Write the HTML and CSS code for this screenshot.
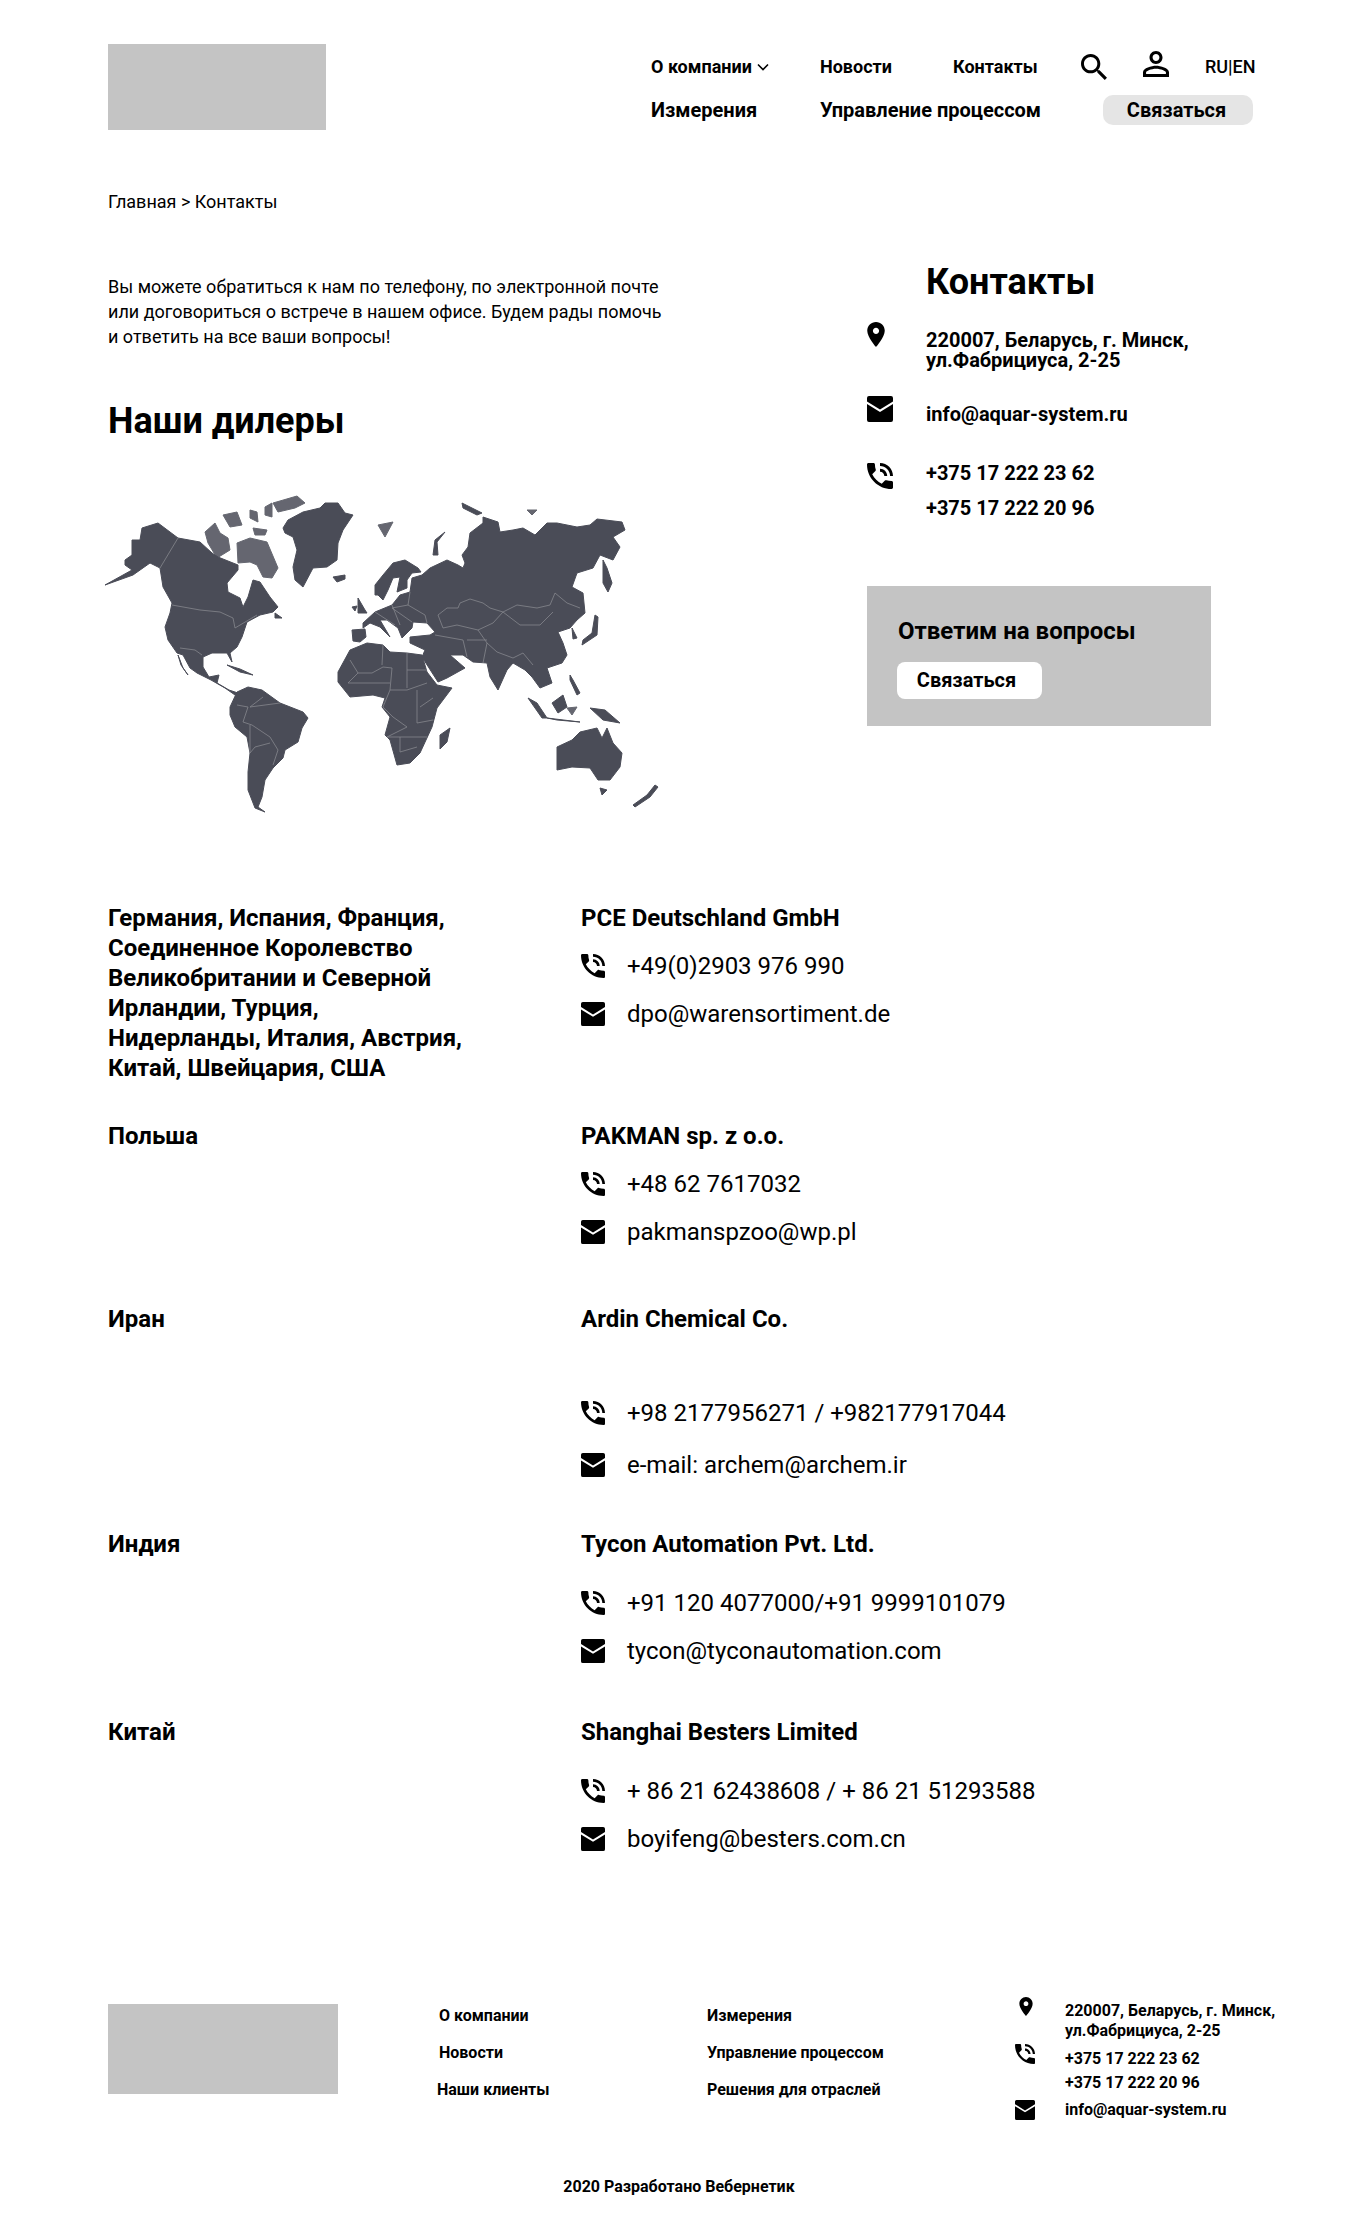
FILE: index.html
```html
<!DOCTYPE html>
<html lang="ru">
<head>
    <meta charset="UTF-8">
    <title>Контакты</title>
    <link rel="stylesheet" href="styles.css">
</head>
<body>

    <svg class="sprite" xmlns="http://www.w3.org/2000/svg">
        <symbol id="i-pin" viewBox="5 2 14 20"><path d="M12 2C8.13 2 5 5.13 5 9c0 5.25 7 13 7 13s7-7.75 7-13c0-3.87-3.13-7-7-7zm0 9.5c-1.38 0-2.5-1.12-2.5-2.5s1.12-2.5 2.5-2.5 2.5 1.12 2.5 2.5-1.12 2.5-2.5 2.5z"/></symbol>
        <symbol id="i-mail" viewBox="0 0 26 26"><path fill-rule="evenodd" d="M2 0h22a2 2 0 0 1 2 2v22a2 2 0 0 1-2 2H2a2 2 0 0 1-2-2V2a2 2 0 0 1 2-2zM0 5.5V8l13 8 13-8V5.5l-13 8z"/></symbol>
        <symbol id="i-phone" viewBox="3 3 18 18"><path d="M20 15.5c-1.25 0-2.45-.2-3.57-.57-.35-.11-.74-.03-1.02.24l-2.2 2.2c-2.83-1.44-5.15-3.75-6.59-6.59l2.2-2.21c.28-.26.36-.65.25-1C8.7 6.45 8.5 5.25 8.5 4c0-.55-.45-1-1-1H4c-.55 0-1 .45-1 1 0 9.39 7.61 17 17 17 .55 0 1-.45 1-1v-3.5c0-.55-.45-1-1-1zM19 12h2c0-4.97-4.03-9-9-9v2c3.87 0 7 3.13 7 7zm-4 0h2c0-2.76-2.24-5-5-5v2c1.66 0 3 1.34 3 3z"/></symbol>
    </svg>

    <header class="header">
        <div class="logo"></div>
        <nav class="nav">
            <a class="nav-top" href="#">О компании
                <svg class="chevron" viewBox="0 0 12 8"><path d="M1 1.5l5 5 5-5" fill="none" stroke="#000" stroke-width="1.6"/></svg>
            </a>
            <a class="nav-top" href="#">Новости</a>
            <a class="nav-top" href="#">Контакты</a>
            <div class="nav-tools">
                <svg class="tool-search" viewBox="3 3 17.5 17.5"><path d="M15.5 14h-.79l-.28-.27C15.41 12.59 16 11.11 16 9.5 16 5.91 13.09 3 9.5 3S3 5.91 3 9.5 5.91 16 9.5 16c1.61 0 3.09-.59 4.23-1.57l.27.28v.79l5 4.99L20.49 19l-4.99-5zm-6 0C7.01 14 5 11.99 5 9.5S7.01 5 9.5 5 14 7.01 14 9.5 11.99 14 9.5 14z"/></svg>
                <svg class="tool-user" viewBox="4 4 16 16"><path d="M12 5.9c1.16 0 2.1.94 2.1 2.1s-.94 2.1-2.1 2.1S9.9 9.16 9.9 8s.94-2.1 2.1-2.1m0 9c2.97 0 6.1 1.46 6.1 2.1v1.1H5.9V17c0-.64 3.13-2.1 6.1-2.1M12 4C9.79 4 8 5.79 8 8s1.79 4 4 4 4-1.79 4-4-1.79-4-4-4zm0 9c-2.67 0-8 1.34-8 4v3h16v-3c0-2.66-5.33-4-8-4z"/></svg>
                <span class="lang">RU|EN</span>
            </div>
            <a class="nav-main" href="#">Измерения</a>
            <a class="nav-main" href="#">Управление процессом</a>
            <a class="nav-btn" href="#">Связаться</a>
        </nav>
    </header>

    <div class="breadcrumbs">Главная &gt; Контакты</div>

    <main class="content">
        <section class="intro">
            <p class="intro-text">Вы можете обратиться к нам по телефону, по электронной почте<br>или договориться о встрече в нашем офисе. Будем рады помочь<br>и ответить на все ваши вопросы!</p>
            <h2 class="dealers-title">Наши дилеры</h2>
            <svg class="world-map" viewBox="100 480 580 340">
                <g class="land">
                    <!-- north america -->
                    <polygon points="125,560 132,555 132,540 140,540 142,528 158,523 178,538 200,542 212,553 218,557 238,565 238,570 227,583 228,592 240,598 243,607 248,597 253,580 260,582 270,597 278,607 273,612 260,615 247,622 242,637 237,647 230,653 232,662 227,653 212,653 203,657 203,667 209,677 219,675 217,683 229,690 238,693 235,695 225,688 211,680 197,673 190,668 183,655 177,653 168,640 165,627 170,613 172,603 163,587 160,568 150,563 133,575 105,585 132,570 125,565"/>
                    <polygon points="178,655 183,668 188,675 181,665"/>
                    <polygon points="275,613 282,618 275,618"/>
                    <polygon points="227,665 240,669 253,675 240,672"/>
                    <!-- south america -->
                    <polygon points="230,707 237,692 248,687 262,690 280,703 303,712 308,718 302,728 298,742 285,750 283,758 273,768 265,780 262,797 258,807 265,812 255,808 248,790 248,772 250,753 247,737 235,727 230,715"/>
                    <!-- greenland, iceland -->
                    <polygon points="283,528 288,520 303,512 320,508 325,503 338,503 345,513 353,515 343,530 338,543 337,560 327,567 313,568 303,587 295,580 293,567 297,550 293,537 285,533"/>
                    <polygon points="333,577 345,575 345,579 337,582"/>
                    <!-- africa -->
                    <polygon points="338,672 350,650 367,643 383,645 390,652 407,653 422,655 427,672 437,685 452,688 437,708 432,727 420,753 410,763 397,765 390,740 385,735 390,717 382,707 385,698 373,695 350,697 338,682"/>
                    <polygon points="440,735 450,728 447,742 440,749"/>
                    <!-- eurasia -->
                    <polygon points="352,630 365,629 366,637 360,642 353,641"/>
                    <polygon points="375,585 383,575 393,563 405,560 418,568 421,572 412,573 407,580 407,588 397,592 400,577 393,578 388,590 383,600 378,595 375,595"/>
                    <polygon points="410,592 412,578 422,575 430,568 447,560 458,565 463,568 465,563 462,555 468,547 470,533 483,523 483,517 498,522 500,532 513,530 523,528 535,535 547,523 557,523 577,527 590,525 597,519 622,522 625,530 613,537 620,547 613,560 600,555 593,568 577,573 572,587 583,593 585,613 577,620 570,628 558,632 563,643 567,655 562,663 547,668 552,683 540,688 532,677 525,670 513,663 507,670 498,690 490,677 487,663 473,662 463,655 450,655 465,668 447,678 438,682 422,657 425,650 410,643 410,637 430,635 435,632 427,623 413,622 412,628 402,638 398,628 387,620 380,620 390,637 380,627 370,623 363,628 363,623 375,612 392,605 400,595"/>
                    <polygon points="358,598 365,610 367,613 358,613"/>
                    <polygon points="352,607 357,606 355,611"/>
                    <polygon points="603,560 607,568 612,583 608,592 603,583"/>
                    <polygon points="595,615 598,617 597,635 582,645 583,640 592,633"/>
                    <polygon points="572,628 577,638 573,639"/>
                    <polygon points="445,532 435,540 433,555 438,555 437,542"/>
                    <polygon points="462,503 482,513 477,515 463,508"/>
                    <!-- south east asia, oceania -->
                    <polygon points="570,675 573,680 580,693 577,695 570,680"/>
                    <polygon points="528,698 537,703 547,718 542,718"/>
                    <polygon points="552,703 563,695 567,707 558,713"/>
                    <polygon points="590,708 605,710 620,723 603,720"/>
                    <polygon points="547,718 580,722 557,720"/>
                    <polygon points="557,747 572,740 580,732 597,728 602,738 607,728 613,743 622,753 620,767 610,780 598,780 590,768 572,767 557,770"/>
                    <polygon points="600,788 607,790 602,795"/>
                    <polygon points="633,805 647,795 655,785 658,787 650,797 635,807"/>
                </g>
                <g class="land land-faint">
                    <!-- arctic islands -->
                    <polygon points="205,532 215,523 220,533 228,538 230,550 217,558 208,543"/>
                    <polygon points="223,515 237,512 242,525 230,527"/>
                    <polygon points="250,510 257,512 258,522 250,518"/>
                    <polygon points="265,507 272,503 272,517 265,515"/>
                    <polygon points="273,503 297,496 305,503 295,508 278,512"/>
                    <polygon points="237,543 250,538 267,542 278,568 272,578 263,577 257,565 250,562 238,563"/>
                    <polygon points="253,528 267,530 265,535 255,535"/>
                    <polygon points="378,525 393,522 385,537"/>
                    <polygon points="527,510 537,510 532,515"/>
                    <polygon points="567,708 577,707 572,715"/>
                </g>
                <g class="borders">
                    <polyline points="178,538 160,568"/>
                    <polyline points="172,605 200,610 220,612 233,618 235,628 257,615"/>
                    <polyline points="180,648 195,650 202,655"/>
                    <polyline points="237,705 248,707 243,722 252,725 270,737 278,750 273,765"/>
                    <polyline points="250,725 250,753 255,747 270,743"/>
                    <polyline points="263,697 250,707 280,703"/>
                    <polyline points="350,660 358,673 372,673 383,667 392,668 390,690 407,690 427,683"/>
                    <polyline points="383,645 382,665"/>
                    <polyline points="407,653 407,688"/>
                    <polyline points="407,670 427,670"/>
                    <polyline points="358,673 348,683 373,683 390,683"/>
                    <polyline points="390,690 383,707 393,717 407,727 387,737 427,737"/>
                    <polyline points="417,690 417,723 433,720"/>
                    <polyline points="400,737 400,752 417,747"/>
                    <polyline points="433,698 420,707"/>
                    <polyline points="438,615 447,608 458,608 460,603 470,599 483,603 490,608 503,612 517,605 537,608 550,605 555,593 567,603 580,608"/>
                    <polyline points="503,612 520,625 540,625 553,612"/>
                    <polyline points="503,612 493,623 478,630 457,625 443,628 438,615"/>
                    <polyline points="478,630 487,643 497,652 513,658 523,653 533,665"/>
                    <polyline points="435,635 463,640 467,657"/>
                    <polyline points="467,640 487,640"/>
                    <polyline points="487,643 483,663"/>
                    <polyline points="410,592 408,605 425,615 427,623"/>
                    <polyline points="392,605 400,625"/>
                    <polyline points="375,612 395,625"/>
                    <polyline points="408,605 392,608 412,622"/>
                </g>
            </svg>
        </section>

        <aside class="contacts">
            <h2 class="contacts-title">Контакты</h2>
            <div class="contact-row contact-address">
                <svg class="ic-pin"><use href="#i-pin"/></svg>
                <div class="contact-text">220007, Беларусь, г. Минск,<br>ул.Фабрициуса, 2-25</div>
            </div>
            <div class="contact-row contact-mail">
                <svg class="ic"><use href="#i-mail"/></svg>
                <div class="contact-text">info@aquar-system.ru</div>
            </div>
            <div class="contact-row contact-phone">
                <svg class="ic"><use href="#i-phone"/></svg>
                <div class="contact-text">+375 17 222 23 62<br>+375 17 222 20 96</div>
            </div>
            <div class="ask-box">
                <div class="ask-title">Ответим на вопросы</div>
                <a class="ask-btn" href="#">Связаться</a>
            </div>
        </aside>
    </main>

    <section class="dealers">
        <div class="dealer">
            <div class="dealer-country">Германия, Испания, Франция,<br>Соединенное Королевство<br>Великобритании и Северной<br>Ирландии, Турция,<br>Нидерланды, Италия, Австрия,<br>Китай, Швейцария, США</div>
            <div class="dealer-info">
                <div class="dealer-name">PCE Deutschland GmbH</div>
                <div class="dealer-line"><svg class="ic"><use href="#i-phone"/></svg>+49(0)2903 976 990</div>
                <div class="dealer-line"><svg class="ic"><use href="#i-mail"/></svg>dpo@warensortiment.de</div>
            </div>
        </div>
        <div class="dealer">
            <div class="dealer-country">Польша</div>
            <div class="dealer-info">
                <div class="dealer-name">PAKMAN sp. z o.o.</div>
                <div class="dealer-line"><svg class="ic"><use href="#i-phone"/></svg>+48 62 7617032</div>
                <div class="dealer-line"><svg class="ic"><use href="#i-mail"/></svg>pakmanspzoo@wp.pl</div>
            </div>
        </div>
        <div class="dealer dealer-iran">
            <div class="dealer-country">Иран</div>
            <div class="dealer-info">
                <div class="dealer-name">Ardin Chemical Co.</div>
                <div class="dealer-line"><svg class="ic"><use href="#i-phone"/></svg>+98 2177956271 / +982177917044</div>
                <div class="dealer-line"><svg class="ic"><use href="#i-mail"/></svg>e-mail: archem@archem.ir</div>
            </div>
        </div>
        <div class="dealer dealer-spaced">
            <div class="dealer-country">Индия</div>
            <div class="dealer-info">
                <div class="dealer-name">Tycon Automation Pvt. Ltd.</div>
                <div class="dealer-line"><svg class="ic"><use href="#i-phone"/></svg>+91 120 4077000/+91 9999101079</div>
                <div class="dealer-line"><svg class="ic"><use href="#i-mail"/></svg>tycon@tyconautomation.com</div>
            </div>
        </div>
        <div class="dealer dealer-spaced">
            <div class="dealer-country">Китай</div>
            <div class="dealer-info">
                <div class="dealer-name">Shanghai Besters Limited</div>
                <div class="dealer-line"><svg class="ic"><use href="#i-phone"/></svg>+ 86 21 62438608 / + 86 21 51293588</div>
                <div class="dealer-line"><svg class="ic"><use href="#i-mail"/></svg>boyifeng@besters.com.cn</div>
            </div>
        </div>
    </section>

    <footer class="footer">
        <div class="footer-top">
            <div class="footer-logo"></div>
            <div class="footer-links">
                <a href="#">О компании</a>
                <a href="#">Новости</a>
                <a class="shift" href="#">Наши клиенты</a>
            </div>
            <div class="footer-links footer-links-2">
                <a href="#">Измерения</a>
                <a href="#">Управление процессом</a>
                <a href="#">Решения для отраслей</a>
            </div>
            <div class="footer-contacts">
                <div class="footer-row footer-address">
                    <svg class="ic-pin-sm"><use href="#i-pin"/></svg>
                    <div>220007, Беларусь, г. Минск,<br>ул.Фабрициуса, 2-25</div>
                </div>
                <div class="footer-row footer-phone">
                    <svg class="ic-sm"><use href="#i-phone"/></svg>
                    <div>+375 17 222 23 62<br>+375 17 222 20 96</div>
                </div>
                <div class="footer-row footer-mail">
                    <svg class="ic-sm"><use href="#i-mail"/></svg>
                    <div>info@aquar-system.ru</div>
                </div>
            </div>
        </div>
        <div class="copyright">2020 Разработано Вебернетик</div>
    </footer>

</body>
</html>
```

FILE: styles.css
```css
* {
    box-sizing: border-box;
}
body {
    font-family: Roboto, "Liberation Sans", sans-serif;
    background: #fff;
    color: #000;
    margin: 0;
    padding: 0;
}
a {
    color: #000;
    text-decoration: none;
}
.sprite {
    display: none;
}
.header {
    display: flex;
    padding: 44px 0 0 108px;
}
.logo {
    width: 218px;
    height: 86px;
    background: #c4c4c4;
}
.nav {
    display: grid;
    grid-template-columns: 169px 133px 128px auto;
    grid-template-rows: 44px 44px;
    align-items: center;
    margin-left: 325px;
}
.nav-top {
    font-size: 18px;
    font-weight: 700;
    white-space: nowrap;
}
.chevron {
    width: 12px;
    height: 8px;
    margin-left: 1px;
    vertical-align: 2px;
}
.nav-main {
    font-size: 20px;
    font-weight: 700;
    white-space: nowrap;
}
.nav-main + .nav-main {
    grid-column: 2 / 4;
}
.nav-tools {
    display: flex;
    align-items: center;
    padding-top: 2px;
}
.tool-search {
    width: 26px;
    height: 26px;
}
.tool-user {
    width: 26px;
    height: 26px;
    margin: 0 0 6px 36px;
}
.lang {
    font-size: 18px;
    font-weight: 500;
    margin: -2px 0 0 36px;
}
.nav-btn {
    width: 150px;
    height: 30px;
    line-height: 30px;
    padding-right: 3px;
    border-radius: 10px;
    background: #e5e5e5;
    text-align: center;
    font-size: 20px;
    font-weight: 700;
    margin-left: 22px;
}
.breadcrumbs {
    font-size: 18px;
    line-height: 20px;
    margin: 60px 0 0 108px;
}
.content {
    display: flex;
    margin-top: 48px;
    padding-left: 108px;
}
.intro {
    width: 759px;
}
.intro-text {
    margin: 14px 0 0;
    font-size: 18px;
    line-height: 25px;
}
.dealers-title {
    margin: 50px 0 0;
    font-size: 36px;
    line-height: 44px;
    font-weight: 700;
}
.world-map {
    display: block;
    width: 580px;
    height: 340px;
    margin: 37px 0 0 -8px;
    filter: blur(0.6px);
}
.land polygon {
    fill: #4a4c57;
    stroke: #4a4c57;
    stroke-width: 1;
    stroke-linejoin: round;
}
.land-faint {
    opacity: 0.85;
}
.borders polyline {
    fill: none;
    stroke: #85868d;
    stroke-width: 0.8;
}
.contacts-title {
    margin: 0 0 0 59px;
    font-size: 36px;
    line-height: 44px;
    font-weight: 700;
}
.contact-row {
    display: flex;
    font-size: 20px;
    font-weight: 700;
}
.contact-text {
    margin-left: 33px;
}
.ic {
    flex: none;
    width: 26px;
    height: 26px;
}
.ic-pin {
    flex: none;
    width: 18px;
    height: 25px;
    margin-right: 8px;
}
.contact-address {
    margin-top: 18px;
    line-height: 20px;
}
.contact-address .contact-text {
    margin-top: 8px;
}
.contact-mail {
    margin-top: 26px;
    line-height: 24px;
}
.contact-mail .contact-text {
    margin-top: 6px;
}
.contact-phone {
    margin-top: 37px;
    line-height: 35px;
}
.contact-phone .contact-text {
    margin-top: -7px;
}
.ask-box {
    width: 344px;
    height: 140px;
    margin-top: 60px;
    padding: 30px 0 0 31px;
    background: #c4c4c4;
}
.ask-title {
    font-size: 24px;
    line-height: 30px;
    font-weight: 700;
}
.ask-btn {
    display: block;
    width: 145px;
    height: 37px;
    line-height: 37px;
    margin: 16px 0 0 -1px;
    padding-right: 6px;
    border-radius: 8px;
    background: #fff;
    text-align: center;
    font-size: 20px;
    font-weight: 700;
}
.dealers {
    margin-top: 83px;
    padding-left: 108px;
}
.dealer {
    display: flex;
    margin-bottom: 38px;
}
.dealer-country {
    width: 473px;
    font-size: 24px;
    line-height: 30px;
    font-weight: 700;
}
.dealer-info {
    padding-bottom: 10px;
}
.dealer-name {
    font-size: 24px;
    line-height: 30px;
    font-weight: 700;
}
.dealer-line {
    display: flex;
    align-items: center;
    height: 48px;
    font-size: 24px;
}
.dealer-line .ic {
    width: 24px;
    height: 24px;
    margin-right: 22px;
}
.dealer-line:nth-child(2) {
    margin-top: 9px;
}
.dealer-iran .dealer-line:nth-child(2) {
    margin-top: 55px;
}
.dealer-iran .dealer-line:nth-child(3) {
    margin-top: 4px;
}
.dealer-iran .dealer-info {
    padding-bottom: 2px;
}
.dealer-spaced .dealer-line:nth-child(2) {
    margin-top: 20px;
}
.dealer-spaced .dealer-info {
    padding-bottom: 4px;
}
.footer {
    margin-top: 120px;
    padding-left: 108px;
}
.footer-top {
    display: flex;
    height: 140px;
}
.footer-logo {
    width: 230px;
    height: 90px;
    margin-top: 17px;
    background: #c4c4c4;
}
.footer-links {
    display: flex;
    flex-direction: column;
    gap: 19px;
    width: 268px;
    margin: 20px 0 0 101px;
    font-size: 16px;
    line-height: 18px;
    font-weight: 700;
}
.footer-links a {
    display: block;
}
.footer-links .shift {
    margin-left: -2px;
}
.footer-links-2 {
    width: 300px;
    margin-left: 0;
}
.footer-contacts {
    margin: 14px 0 0 8px;
    font-size: 16px;
    font-weight: 700;
}
.footer-row {
    display: flex;
}
.footer-row > div {
    margin-left: 30px;
}
.ic-sm {
    flex: none;
    width: 20px;
    height: 20px;
}
.ic-pin-sm {
    flex: none;
    width: 14px;
    height: 19px;
    margin: -4px 2px 0 4px;
}
.footer-address {
    line-height: 20px;
}
.footer-phone {
    margin-top: 6px;
    line-height: 24px;
}
.footer-phone .ic-sm {
    margin-top: -3px;
}
.footer-mail {
    margin-top: 5px;
    line-height: 20px;
}
.copyright {
    margin: 0 0 0 -108px;
    padding-top: 50px;
    text-align: center;
    font-size: 16px;
    line-height: 20px;
    font-weight: 700;
}
```
